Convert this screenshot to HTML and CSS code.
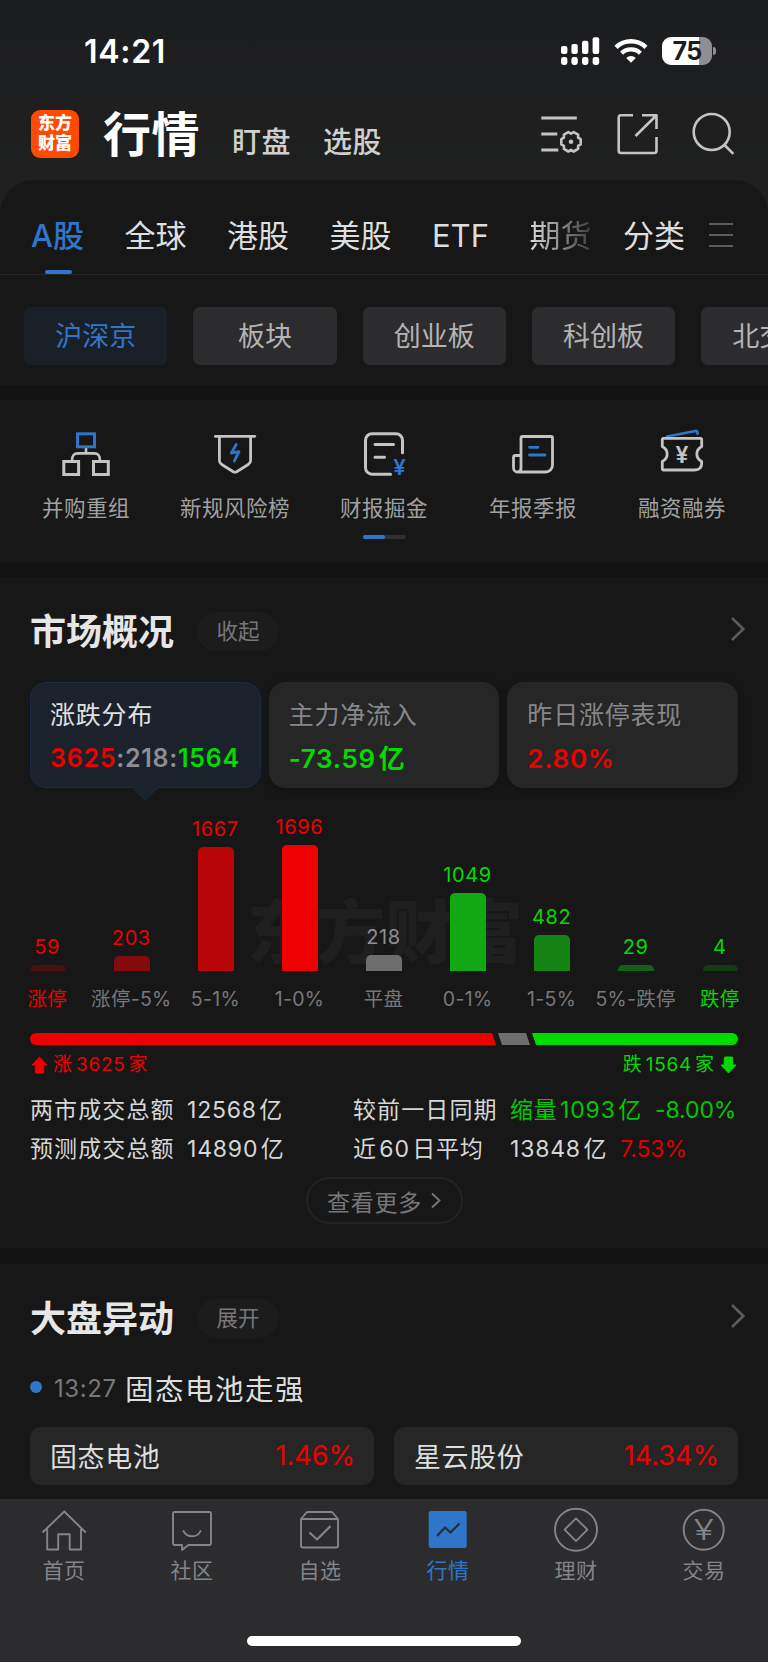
FILE: index.html
```html
<!DOCTYPE html>
<html lang="zh-CN">
<head>
  <meta charset="UTF-8" />
  <meta name="viewport" content="width=device-width, initial-scale=1" />
  <title>行情</title>
  <link rel="stylesheet" href="styles.css">
</head>
<body>
<div class="app">
  <div class="status-bar">
    <span class="clock">14:21</span>
    <svg class="signal" width="39" height="28" viewBox="0 0 39 28" fill="#fff">
      <rect x="0" y="9" width="6.4" height="8" rx="2"/>
      <rect x="10.4" y="7" width="6.4" height="10" rx="2"/>
      <rect x="21" y="3.7" width="6.4" height="13.3" rx="2"/>
      <rect x="31.6" y="0.3" width="6.6" height="16.7" rx="2"/>
      <rect x="0" y="20" width="6.4" height="8" rx="2.4"/>
      <rect x="10.4" y="20" width="6.4" height="8" rx="2.4"/>
      <rect x="21" y="20" width="6.4" height="8" rx="2.4"/>
      <rect x="31.6" y="20" width="6.6" height="8" rx="2.4"/>
    </svg>
    <svg class="wifi" width="34" height="26" viewBox="0 0 34 26" fill="none" stroke="#fff" stroke-width="4.4">
      <path d="M2 9.4a21.5 21.5 0 0 1 30 0"/>
      <path d="M7.6 15.2a13.4 13.4 0 0 1 18.8 0"/>
      <path d="M17 24.8l-4.8-4.9a7 7 0 0 1 9.6 0z" fill="#fff" stroke="none"/>
    </svg>
    <div class="battery"><span>75</span></div>
    <i class="battery-tip"></i>
  </div>

  <header class="header">
    <div class="logo"><span>东方</span><span>财富</span></div>
    <nav class="header-nav">
      <h1>行情</h1>
      <a>盯盘</a>
      <a>选股</a>
    </nav>
    <div class="header-icons">
      <svg width="42" height="42" viewBox="0 0 42 42" fill="none" stroke="#c4c4c4" stroke-width="2.8" stroke-linejoin="round">
        <path d="M0.3 5h35.5M0.3 21h16M0.3 37h17"/>
        <g transform="translate(30 28.8)" stroke-width="2.6">
          <path d="M9.7-2.6v5.2L7.1 4.1v3L2.6 9.7 0 8.2l-2.6 1.5-4.5-2.6v-3l-2.6-1.5v-5.2l2.6-1.5v-3l4.5-2.6L0-8.2l2.6-1.5 4.5 2.6v3z"/>
          <circle r="2.3" fill="#c4c4c4" stroke="none"/>
        </g>
      </svg>
      <svg width="42" height="42" viewBox="0 0 42 42" fill="none" stroke="#c4c4c4" stroke-width="2.6" stroke-linejoin="round">
        <path d="M17 2.3H5A2.3 2.3 0 0 0 2.7 4.5v33.2A2.3 2.3 0 0 0 5 40h33.2a2.3 2.3 0 0 0 2.3-2.3V24"/>
        <path d="M26 2.3h14.5V16M40.300 2.500L19.500 23"/>
      </svg>
      <svg width="42" height="42" viewBox="0 0 42 42" fill="none" stroke="#c4c4c4" stroke-width="2.6">
        <circle cx="19.7" cy="19" r="18"/>
        <path d="M32 31.5l9.3 9.3"/>
      </svg>
    </div>
  </header>

  <main class="panel">
    <nav class="tabs">
      <a class="active">A股</a>
      <a>全球</a>
      <a>港股</a>
      <a>美股</a>
      <a>ETF</a>
      <a class="fade">期货</a>
      <a class="sort">分类</a>
      <i class="menu"></i>
    </nav>
    <div class="chips">
      <a class="active">沪深京</a>
      <a>板块</a>
      <a>创业板</a>
      <a>科创板</a>
      <a>北交所</a>
    </div>
  </main>

  <section class="tools">
    <div class="tool-list">
      <a>
        <svg width="48" height="48" viewBox="0 0 48 48" fill="none" stroke="#c4c4c4" stroke-width="3">
          <path d="M24 20v5M10 33c0-5.5 1.5-7.6 6-7.6h16c4.5 0 6 2.1 6 7.6" stroke-width="2.6"/>
          <rect x="15.5" y="5.8" width="17" height="13" stroke="#2f76c9"/>
          <rect x="1.8" y="33.5" width="14.8" height="13"/>
          <rect x="31.5" y="33.5" width="14.8" height="13"/>
        </svg>
        <span>并购重组</span>
      </a>
      <a>
        <svg width="48" height="48" viewBox="0 0 48 48" fill="none" stroke="#c4c4c4" stroke-width="2.8" stroke-linecap="round" stroke-linejoin="round">
          <path d="M4.3 8.3h39.400"/>
          <path d="M8.4 9v23.5c0 2 .8 3 2.4 4l11.5 7.2q1.7 .8 3.4 0L37.2 36.5c1.6-1 2.4-2 2.4-4V9"/>
          <path d="M25.200 16.500l-4.800 8.500 7.600-1.300-4.700 9.300" stroke="#2f76c9"/>
        </svg>
        <span>新规风险榜</span>
      </a>
      <a>
        <svg width="48" height="48" viewBox="0 0 48 48" fill="none" stroke="#c4c4c4" stroke-width="3" stroke-linecap="round">
          <path d="M30.5 46.2H12a6.500 6.500 0 0 1-6.500-6.500V12.200a6.500 6.500 0 0 1 6.500-6.500h24a6.500 6.500 0 0 1 6.500 6.500v12.500"/>
          <path d="M15 16.5h18.500M15 29.300h9.500"/>
          <text class="yen yen-blue" x="39.5" y="46.5">¥</text>
        </svg>
        <span>财报掘金</span>
      </a>
      <a>
        <svg width="48" height="48" viewBox="0 0 48 48" fill="none" stroke="#c4c4c4" stroke-width="2.8" stroke-linecap="round" stroke-linejoin="round">
          <path d="M12 40V10q0-1.500 1.500-1.500H42q1.500 0 1.500 1.500v27a7 7 0 0 1-7 7H8.500a4 4 0 0 1-4-4V29.500q0-2 2-2H12M12 40q0 4-3.500 4"/>
          <path d="M20.500 19.300h8.500M20.500 27h15.500" stroke="#2f76c9"/>
        </svg>
        <span>年报季报</span>
      </a>
      <a>
        <svg width="48" height="48" viewBox="0 0 48 48" fill="none" stroke="#c4c4c4" stroke-width="2.8" stroke-linecap="round" stroke-linejoin="round">
          <path d="M9 8.500L37.500 3q2-.3 2 2.500" stroke="#2f76c9"/>
          <path d="M5.500 10.300h37q1.200 0 1.200 1.200v7c-6.500 3.500-6.500 11.500 0 15v1.500q0 7-7 7H5.500q-1.200 0-1.200-1.200v-7.300c6.500-3.500 6.500-11.500 0-15v-7q0-1.200 1.200-1.200z"/>
          <text class="yen" x="24" y="34.5">¥</text>
        </svg>
        <span>融资融券</span>
      </a>
    </div>
    <div class="pager"><i></i></div>
  </section>

  <section class="market">
    <div class="section-head">
      <h2>市场概况</h2>
      <span class="pill">收起</span>
      <svg width="16" height="26" viewBox="0 0 16 26" fill="none" stroke="#5c5c5e" stroke-width="2.6"><path d="M2 2l11.300 11L2 24"/></svg>
    </div>

    <div class="cards">
      <div class="card active">
        <p>涨跌分布</p>
        <b class="wide"><span class="up">3625</span><span class="flat">:218:</span><span class="down">1564</span></b>
      </div>
      <div class="card">
        <p>主力净流入</p>
        <b class="down">-73.59<span class="unit">亿</span></b>
      </div>
      <div class="card">
        <p>昨日涨停表现</p>
        <b class="up">2.80%</b>
      </div>
    </div>

    <div class="chart">
      <div class="watermark">东方财富</div>
      <div class="col up"><span>59</span><i class="bar r1" style="height: 6px"></i><em class="up">涨停</em></div>
      <div class="col up"><span>203</span><i class="bar r2" style="height: 15px"></i><em>涨停-5%</em></div>
      <div class="col up"><span>1667</span><i class="bar r3" style="height: 124px"></i><em>5-1%</em></div>
      <div class="col up"><span>1696</span><i class="bar r4" style="height: 126px"></i><em>1-0%</em></div>
      <div class="col flat"><span>218</span><i class="bar g0" style="height: 16px"></i><em>平盘</em></div>
      <div class="col down"><span>1049</span><i class="bar g4" style="height: 78px"></i><em>0-1%</em></div>
      <div class="col down"><span>482</span><i class="bar g3" style="height: 36px"></i><em>1-5%</em></div>
      <div class="col down"><span>29</span><i class="bar g2" style="height: 6px"></i><em>5%-跌停</em></div>
      <div class="col down"><span>4</span><i class="bar g1" style="height: 6px"></i><em class="down">跌停</em></div>
    </div>

    <div class="ratio">
      <i class="ratio-up"></i>
      <i class="ratio-flat"></i>
      <i class="ratio-down"></i>
    </div>
    <div class="ratio-text">
      <span class="up">
        <svg width="17" height="18" viewBox="0 0 17 18"><path d="M8.500 1L16 9h-3.300v7.200q0 .8-.8.8H5.100q-.8 0-.8-.8V9H1z" fill="#ee0000" stroke="#ee0000" stroke-linejoin="round"/></svg>
        涨<b>3625</b>家
      </span>
      <span class="down">
        跌<b>1564</b>家
        <svg width="17" height="18" viewBox="0 0 17 18"><path d="M8.500 17L16 9h-3.300V1.800q0-.8-.8-.8H5.100q-.8 0-.8.8V9H1z" fill="#00dc00" stroke="#00dc00" stroke-linejoin="round"/></svg>
      </span>
    </div>

    <div class="stats">
      <span class="label">两市成交总额</span>
      <span>12568<u>亿</u></span>
      <span class="label">较前一日同期</span>
      <span class="down">缩量<u>1093</u><u>亿</u><s>-8.00%</s></span>
      <span class="label">预测成交总额</span>
      <span>14890<u>亿</u></span>
      <span>近<u>60</u><u>日平均</u></span>
      <span>13848<u>亿</u><s class="up">7.53%</s></span>
    </div>

    <a class="more">查看更多
      <svg width="10" height="17" viewBox="0 0 10 17" fill="none" stroke="#77777b" stroke-width="1.8"><path d="M1 1.5l7.500 7L1 15.500"/></svg>
    </a>
  </section>

  <section class="moves">
    <div class="section-head">
      <h2>大盘异动</h2>
      <span class="pill">展开</span>
      <svg width="16" height="26" viewBox="0 0 16 26" fill="none" stroke="#5c5c5e" stroke-width="2.6"><path d="M2 2l11.300 11L2 24"/></svg>
    </div>
    <div class="event">
      <i></i>
      <time>13:27</time>
      <span>固态电池走强</span>
    </div>
    <div class="stocks">
      <div class="stock"><span>固态电池</span><b>1.46%</b></div>
      <div class="stock"><span>星云股份</span><b>14.34%</b></div>
    </div>
  </section>

  <footer class="tabbar">
    <nav>
      <a>
        <svg width="46" height="46" viewBox="0 0 46 46" fill="none" stroke="#848489" stroke-width="1.9" stroke-linejoin="round">
          <path d="M1.500 25.500L23.300 4.500l21.500 21"/>
          <path d="M6.200 22v20.500h11V27.300h11.500v15.200H40V22"/>
        </svg>
        <span>首页</span>
      </a>
      <a>
        <svg width="46" height="46" viewBox="0 0 46 46" fill="none" stroke="#848489" stroke-width="1.9" stroke-linejoin="round" stroke-linecap="round">
          <path d="M5.500 5h35q1.500 0 1.500 1.500v30q0 1.500-1.500 1.500H19.500l-6.500 5V38H5.500Q4 38 4 36.500v-30Q4 5 5.500 5z"/>
          <path d="M14.500 24c3.500 7 14 7 17 0"/>
        </svg>
        <span>社区</span>
      </a>
      <a>
        <svg width="46" height="46" viewBox="0 0 46 46" fill="none" stroke="#848489" stroke-width="1.9" stroke-linejoin="round">
          <path d="M4 12v26.500Q4 40.500 6 40.500h33q2 0 2-2V12M4 12h37l-5.500-6.500Q35 5 34 5H11q-1 0-1.500.5z"/>
          <path d="M12.500 25.500l7.500 7L33.500 19" stroke-width="2.2"/>
        </svg>
        <span>自选</span>
      </a>
      <a class="active">
        <svg width="46" height="46" viewBox="0 0 46 46" fill="none">
          <rect x="3.7" y="4" width="38" height="37" rx="2.5" fill="#2f76c9"/>
          <path d="M12 29l8-8.500 5.500 5L34.500 16.500" stroke="#2c2c2e" stroke-width="2.2"/>
        </svg>
        <span>行情</span>
      </a>
      <a>
        <svg width="46" height="46" viewBox="0 0 46 46" fill="none" stroke="#848489" stroke-width="1.9" stroke-linejoin="round">
          <circle cx="23" cy="22.7" r="21"/>
          <path d="M23 11.300L34.400 22.700 23 34.100 11.600 22.700z"/>
        </svg>
        <span>理财</span>
      </a>
      <a>
        <svg width="46" height="46" viewBox="0 0 46 46" fill="none" stroke="#848489" stroke-width="1.9">
          <circle cx="22.7" cy="22.7" r="20"/>
          <text class="yen yen-thin" x="22.7" y="33.3" textLength="20" lengthAdjust="spacingAndGlyphs">¥</text>
        </svg>
        <span>交易</span>
      </a>
    </nav>
    <div class="home-indicator"></div>
  </footer>
</div>
</body>
</html>
```
FILE: styles.css
```css
* {
  box-sizing: border-box;
}

body {
  margin: 0;
  background: #fff;
  font-family: Inter, "Noto Sans CJK SC", sans-serif;
  overflow: hidden;
}

h1, h2, p {
  margin: 0;
}

i, em {
  font-style: normal;
}

u, s {
  text-decoration: none;
}

a, span, b, h1, h2, p, em, time {
  white-space: nowrap;
}

svg {
  display: block;
  flex-shrink: 0;
  overflow: visible;
}

.up { color: #ee0000; }
.down { color: #00dc00; }
.flat { color: #8e8e93; }

.app {
  width: 768px;
  height: 1662px;
  display: flex;
  flex-direction: column;
  overflow: hidden;
  background: linear-gradient(#1c1d1f, #202020 220px, #121212 221px);
}

/* status bar */
.status-bar {
  height: 102px;
  padding: 0 52px 0 84px;
  display: flex;
  align-items: center;
  flex-shrink: 0;
}

.clock {
  flex: 1;
  color: #fff;
  font-size: 32px;
  font-weight: 600;
  letter-spacing: 0.7px;
}

.wifi {
  margin: 0 14px;
}

.battery {
  width: 50px;
  height: 28px;
  border-radius: 9px;
  background: linear-gradient(90deg, #fff 37px, #8e8e93 37px);
  color: #1c1d1f;
  font-size: 25px;
  font-weight: 700;
  line-height: 28px;
  text-align: center;
  letter-spacing: -0.6px;
}

.battery-tip {
  width: 3px;
  height: 8px;
  margin-left: 1px;
  border-radius: 0 3px 3px 0;
  background: #8e8e93;
}

/* header */
.header {
  height: 78px;
  padding: 8px 34px 0 31px;
  display: flex;
  align-items: flex-start;
  flex-shrink: 0;
}

.logo {
  width: 48px;
  height: 48px;
  padding-top: 4px;
  border-radius: 9px;
  background: #ff4a03;
  color: #fff;
  font-size: 17px;
  font-weight: 900;
  line-height: 19.5px;
  display: flex;
  flex-direction: column;
  align-items: center;
}

.header-nav {
  margin-left: 24px;
  display: flex;
  gap: 32px;
  line-height: 48px;
}

.header-nav h1 {
  padding-top: 1px;
  color: #fff;
  font-size: 48px;
  font-weight: 600;
  letter-spacing: 0.5px;
}

.header-nav a {
  padding-top: 9px;
  color: #cfcfcf;
  font-size: 29px;
  font-weight: 500;
  letter-spacing: 0.5px;
}

.header-icons {
  margin: 3px 0 0 auto;
  display: flex;
  gap: 33px;
}

.header-icons svg:last-child {
  margin-left: 1px;
}

/* top panel */
.panel {
  height: 205px;
  border-radius: 34px 34px 0 0;
  background: #171717;
  flex-shrink: 0;
}

.tabs {
  height: 95px;
  padding: 18px 30px 0 31px;
  border-bottom: 1px solid #262626;
  display: flex;
  align-items: center;
  gap: 40.5px;
  color: #dedede;
  font-size: 31px;
  line-height: 76px;
}

.tabs .active {
  position: relative;
  color: #2f76c9;
  font-weight: 500;
}

.tabs .active::after {
  content: "";
  position: absolute;
  left: 14px;
  bottom: 0;
  width: 27px;
  height: 4px;
  border-radius: 2px;
  background: #2f76c9;
}

.tabs .fade {
  background: linear-gradient(90deg, #dedede, #3c3c3c);
  -webkit-background-clip: text;
  background-clip: text;
  color: transparent;
}

.tabs .sort {
  margin-left: -9px;
}

.menu {
  width: 24px;
  height: 24px;
  margin: -2px 0 0 -16px;
  border-top: 2.5px solid #5c5c5e;
  border-bottom: 2.5px solid #5c5c5e;
  background: linear-gradient(#5c5c5e, #5c5c5e) center / 100% 2px no-repeat;
}

.chips {
  padding: 32px 0 0 24px;
  display: flex;
  gap: 26px;
  overflow: hidden;
}

.chips a {
  width: 143.3px;
  height: 58px;
  border-radius: 7px;
  background: #2c2c2e;
  color: #b4b4b4;
  font-size: 27px;
  line-height: 60px;
  text-align: center;
  flex-shrink: 0;
}

.chips .active {
  background: #1a2028;
  color: #2f76c9;
}

/* shortcut tools */
.tools {
  height: 162px;
  margin-top: 15px;
  padding-top: 28px;
  background: #171717;
  flex-shrink: 0;
}

.tool-list {
  padding: 0 11.5px;
  display: flex;
}

.tool-list a {
  flex: 1;
  display: flex;
  flex-direction: column;
  align-items: center;
  gap: 16px;
  color: #a0a0a2;
  font-size: 21.5px;
  line-height: 32px;
  letter-spacing: 0.5px;
}

.yen {
  fill: #c4c4c4;
  stroke: none;
  font-size: 23px;
  font-weight: 600;
  letter-spacing: 0;
  text-anchor: middle;
}

.yen-blue {
  fill: #2f76c9;
  font-size: 22px;
}

.yen-thin {
  fill: #848489;
  font-size: 28px;
  font-weight: 300;
}

.pager {
  width: 43px;
  height: 4px;
  margin: 11px auto 0;
  border-radius: 2px;
  background: #303032;
}

.pager i {
  display: block;
  width: 22px;
  height: 4px;
  border-radius: 2px;
  background: #2f76c9;
}

/* section heads */
.section-head {
  height: 40px;
  display: flex;
  align-items: center;
}

.section-head h2 {
  width: 167px;
  color: #e6e6e6;
  font-size: 36px;
  font-weight: 600;
  line-height: 40px;
}

.section-head svg {
  margin: -6px -7.5px 0 auto;
}

.pill {
  width: 82px;
  height: 39px;
  margin-top: -2px;
  border-radius: 20px;
  background: #1c1c1d;
  color: #77777b;
  font-size: 21.5px;
  line-height: 38px;
  text-align: center;
}

/* market overview */
.market {
  height: 671px;
  margin-top: 15px;
  padding: 35px 30px 0;
  background: #171717;
  flex-shrink: 0;
}

.cards {
  margin-top: 30px;
  display: flex;
  gap: 8px;
}

.card {
  flex: 1;
  height: 106px;
  padding: 14px 0 0 19px;
  border: 1px solid #262626;
  border-radius: 16px;
  background: #262626;
  box-shadow: 0 3px 10px rgba(0, 0, 0, 0.25);
}

.card p {
  color: #86868b;
  font-size: 25px;
  line-height: 36px;
  letter-spacing: 0.8px;
}

.card b {
  display: block;
  margin-top: 7px;
  font-size: 26px;
  font-weight: 600;
  line-height: 37px;
  letter-spacing: 0.7px;
}

.card .wide {
  font-size: 25px;
  letter-spacing: 0.75px;
}

.card .unit {
  margin-left: 3px;
}

.card.active {
  position: relative;
  border-color: #1b2c42;
  background: #1b222b;
  box-shadow: none;
}

.card.active p {
  color: #e0e0e0;
}

/* arrow under the selected card */
.card.active::after {
  content: "";
  position: absolute;
  left: 104px;
  bottom: -10px;
  width: 19px;
  height: 19px;
  border: solid #1b2c42;
  border-width: 0 1px 1px 0;
  border-radius: 0 0 4px 0;
  background: linear-gradient(135deg, transparent 50%, #1b222b 50%);
  transform: rotate(45deg);
}

.chart {
  position: relative;
  height: 227px;
  display: flex;
  justify-content: space-between;
  align-items: flex-end;
}

.watermark {
  position: absolute;
  left: 217px;
  top: 95px;
  color: #1f1f1f;
  font-size: 69px;
  font-weight: 900;
  line-height: 100px;
}

.col {
  position: relative;
  width: 35.5px;
  display: flex;
  flex-direction: column;
  align-items: center;
}

.col span {
  font-size: 20px;
  line-height: 24px;
  letter-spacing: 0.6px;
  margin: 0 1px 6px 0;
}

.bar {
  width: 100%;
  border-radius: 5px 5px 0 0;
}

.col em {
  margin: 12px 1px 0 0;
  font-size: 19.5px;
  line-height: 32px;
  letter-spacing: 0.3px;
}

.col em:not(.up):not(.down) {
  color: #77777b;
}

.r1 { background: #4a1012; }
.r2 { background: #850a0e; }
.r3 { background: #b90507; }
.r4 { background: #ee0000; }
.g0 { background: #6e6e6e; }
.g1 { background: #163916; }
.g2 { background: #166016; }
.g3 { background: #158415; }
.g4 { background: #12a814; }

.ratio {
  height: 12px;
  margin-top: 18px;
  display: flex;
  border-radius: 6px;
  overflow: hidden;
}

.ratio-up {
  width: 466px;
  background: #ee0000;
  clip-path: polygon(0 0, 462px 0, 100% 100%, 0 100%);
}

.ratio-flat {
  width: 32px;
  margin-left: 2px;
  background: #6e6e6e;
  clip-path: polygon(0 0, 28px 0, 100% 100%, 4px 100%);
}

.ratio-down {
  flex: 1;
  margin-left: 2px;
  background: #00dc00;
  clip-path: polygon(0 0, 100% 0, 100% 100%, 4px 100%);
}

.ratio-text {
  height: 40px;
  margin: 0 1px;
  display: flex;
  justify-content: space-between;
  font-size: 19px;
  line-height: 40px;
}

.ratio-text span {
  display: flex;
  align-items: center;
}

.ratio-text b {
  margin: 0 3px 0 4px;
  font-weight: 400;
  letter-spacing: 0.7px;
}

.ratio-text .up svg {
  margin-right: 5px;
}

.ratio-text .down svg {
  margin-left: 6px;
}

.stats {
  margin-top: 3px;
  display: grid;
  grid-template-columns: 157px 166px 157px 1fr;
  grid-auto-rows: 39.5px;
  align-items: center;
  color: #d6d6d6;
  font-size: 23px;
  letter-spacing: 0.8px;
}

.stats .label {
  letter-spacing: 1.1px;
}

.stats .down {
  color: #00c800;
}

.stats u {
  margin-left: 2.5px;
}

.stats s {
  margin-left: 13px;
  letter-spacing: -0.1px;
}

.stats .up {
  color: #dc0000;
}

.more {
  width: 157px;
  height: 47px;
  margin: 10px auto 0;
  border: 2px solid #232324;
  border-radius: 24px;
  display: flex;
  align-items: center;
  justify-content: center;
  gap: 9px;
  color: #77777b;
  font-size: 23px;
  letter-spacing: 0.8px;
}

/* market moves */
.moves {
  height: 235px;
  margin-top: 16px;
  padding: 35px 30px 0;
  background: #171717;
  flex-shrink: 0;
}

.event {
  height: 40px;
  margin-top: 28px;
  display: flex;
  align-items: center;
}

.event i {
  width: 12px;
  height: 12px;
  border-radius: 50%;
  background: #2f76c9;
}

.event time {
  width: 73px;
  padding: 3px 0 0 12px;
  color: #77777b;
  font-size: 24px;
  letter-spacing: 0.6px;
}

.event span {
  margin-left: 10px;
  color: #dedede;
  font-size: 28.5px;
  letter-spacing: 1.5px;
}

.stocks {
  margin-top: 20px;
  display: flex;
  gap: 20px;
}

.stock {
  flex: 1;
  height: 58px;
  padding: 0 19px 2px 20px;
  border-radius: 11px;
  background: #262626;
  display: flex;
  align-items: center;
  justify-content: space-between;
  color: #dedede;
  font-size: 27px;
  letter-spacing: 0.6px;
}

.stock b {
  color: #ee0000;
  font-weight: 400;
  letter-spacing: 0;
}

/* bottom tab bar */
.tabbar {
  flex: 1;
  padding-top: 8px;
  background: #2c2c2e;
}

.tabbar nav {
  display: flex;
}

.tabbar a {
  flex: 1;
  display: flex;
  flex-direction: column;
  align-items: center;
  gap: 2px;
  color: #848489;
  font-size: 21px;
  line-height: 32px;
  letter-spacing: 0.5px;
}

.tabbar .active {
  color: #2f76c9;
}

.home-indicator {
  width: 274px;
  height: 10px;
  margin: 49px auto 0;
  border-radius: 5px;
  background: #fff;
}
```
